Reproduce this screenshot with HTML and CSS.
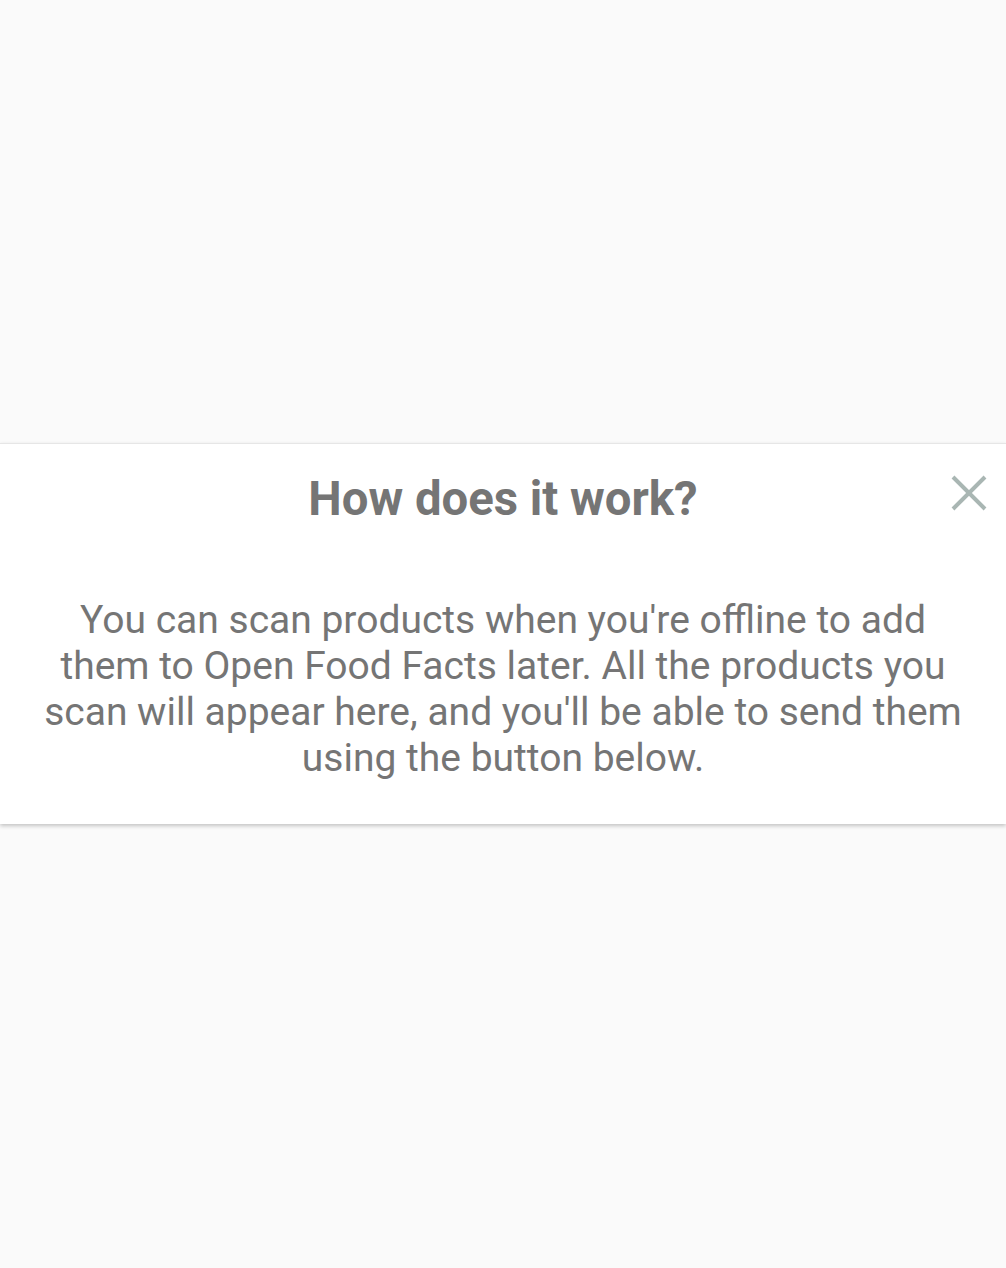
FILE: index.html
```html
<!DOCTYPE html>
<html>
<head>
<meta charset="utf-8">
<link rel="stylesheet" href="styles.css">
</head>
<body>
<div class="screen">
  <div class="spacer-top"></div>
  <section class="card">
    <div class="card-head">
      <h1 class="title">How does it work?</h1>
      <button class="close" aria-label="Close">
        <svg width="38" height="38" viewBox="0 0 38 38"><path d="M3 3 L35 35 M35 3 L3 35" stroke="#a9b6b3" stroke-width="4" fill="none"/></svg>
      </button>
    </div>
    <p class="body">You can scan products when you're offline to add them to Open Food Facts later. All the products you scan will appear here, and you'll be able to send them using the button below.</p>
  </section>
</div>
</body>
</html>
```

FILE: styles.css
```css
html, body {
  margin: 0;
  padding: 0;
  background: #fafafa;
}
.screen {
  width: 1006px;
  height: 1268px;
  background: #fafafa;
  font-family: Roboto, "Noto Sans", sans-serif;
}
.spacer-top {
  height: 443px;
}
.card {
  background: #fff;
  border-top: 1px solid #e6e6e6;
  box-shadow: 0 2px 4px rgba(0,0,0,0.22);
  padding: 0 0 43px;
}
.card-head {
  position: relative;
  height: 112px;
  display: flex;
  justify-content: center;
}
.title {
  margin: 27px 0 0;
  font-size: 47.3px;
  font-weight: 700;
  color: #757575;
  line-height: 56px;
}
.close {
  position: absolute;
  right: 17px;
  top: 29px;
  width: 40px;
  height: 40px;
  padding: 1px;
  border: 0;
  background: none;
}
.body {
  margin: 0;
  padding: 41px 36px 0;
  text-align: center;
  font-size: 39px;
  line-height: 46px;
  color: #757575;
}
```
